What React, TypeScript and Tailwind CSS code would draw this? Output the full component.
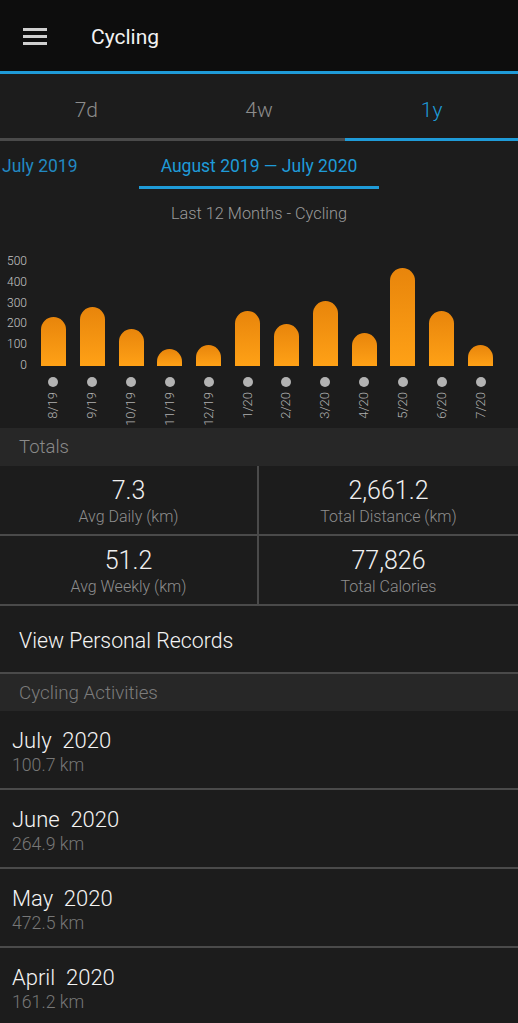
import React from "react";

const bars = [
  { label: "8/19", v: 236 },
  { label: "9/19", v: 287 },
  { label: "10/19", v: 181 },
  { label: "11/19", v: 84 },
  { label: "12/19", v: 100 },
  { label: "1/20", v: 266 },
  { label: "2/20", v: 205 },
  { label: "3/20", v: 313 },
  { label: "4/20", v: 161 },
  { label: "5/20", v: 473 },
  { label: "6/20", v: 265 },
  { label: "7/20", v: 101 },
];

const activities = [
  { m: "July", d: "100.7 km" },
  { m: "June", d: "264.9 km" },
  { m: "May", d: "472.5 km" },
  { m: "April", d: "161.2 km" },
];

export default function App() {
  return (
    <div
      className="w-[518px] h-[1023px] overflow-hidden bg-[#1c1c1c] text-white"
      style={{ fontFamily: "Roboto, 'Liberation Sans', sans-serif" }}
    >
      {/* Header */}
      <div className="h-[71px] bg-[#0d0d0d] flex items-center">
        <div className="ml-[23px] mt-[1px] w-[24px] flex flex-col gap-[4px]">
          <div className="h-[3px] bg-[#cfcfcf]" />
          <div className="h-[3px] bg-[#cfcfcf]" />
          <div className="h-[3px] bg-[#cfcfcf]" />
        </div>
        <div className="ml-[44px] mt-[3px] text-[21px] font-normal leading-none text-[#f2f2f2]">
          Cycling
        </div>
      </div>
      <div className="h-[3px] bg-[#1f9bd8]" />

      {/* Tabs */}
      <div className="grid grid-cols-3 h-[67px]">
        <div className="flex items-center justify-center pt-[10px] border-b-[3px] border-[#4a4a4a] text-[21px] font-light text-[#8c8c8c]">
          7d
        </div>
        <div className="flex items-center justify-center pt-[10px] border-b-[3px] border-[#4a4a4a] text-[21px] font-light text-[#8c8c8c]">
          4w
        </div>
        <div className="flex items-center justify-center pt-[10px] border-b-[3px] border-[#1f9bd8] text-[21px] font-light text-[#1f9bd8]">
          1y
        </div>
      </div>

      {/* Period pager */}
      <div className="grid grid-cols-[1fr_240px_1fr] h-[49px]">
        <div className="pt-[14px] pl-[2px] text-[17.5px] leading-[22px] font-normal text-[#2289c2] whitespace-nowrap">
          July 2019
        </div>
        <div className="flex flex-col items-center pt-[14px]">
          <div className="text-[17.5px] leading-[22px] font-normal text-[#1f9bd8] whitespace-nowrap">
            August 2019 — July 2020
          </div>
          <div className="mt-auto mb-[1px] h-[3px] w-full bg-[#1f9bd8]" />
        </div>
        <div />
      </div>

      {/* Chart title */}
      <div className="h-[48px] pt-[14px] text-center text-[16.3px] leading-[20px] font-light text-[#9a9a9a]">
        Last 12 Months - Cycling
      </div>

      {/* Chart */}
      <div className="h-[190px] flex items-start pt-[16px] pr-[18px]">
        <div className="w-[34px] h-[118px] flex flex-col justify-between items-end pr-[7px] text-[12px] leading-[14px] font-light text-[#c4c4c4]">
          <span>500</span>
          <span>400</span>
          <span>300</span>
          <span>200</span>
          <span>100</span>
          <span>0</span>
        </div>
        <div className="flex-1 grid grid-cols-12">
          {bars.map((b) => (
            <div key={b.label} className="flex flex-col items-center">
              <div className="h-[112px] w-full flex items-end justify-center">
                <div
                  className="w-[25px] rounded-t-full bg-gradient-to-b from-[#e8850b] to-[#ffa116]"
                  style={{ height: `${Math.max(b.v * 0.2066, 12.5)}px` }}
                />
              </div>
              <div className="mt-[11px] w-[10px] h-[10px] rounded-full bg-[#b3b3b3]" />
              <div className="mt-[5px] [writing-mode:vertical-rl] rotate-180 text-[13px] leading-[14px] font-light text-[#b0b0b0] whitespace-nowrap">
                {b.label}
              </div>
            </div>
          ))}
        </div>
      </div>

      {/* Totals header */}
      <div className="h-[38px] bg-[#272727] flex items-center pt-[2px] pl-[19px] text-[18.5px] font-light text-[#8a8a8a]">
        Totals
      </div>

      {/* Totals grid */}
      <div className="grid grid-cols-2">
        {[
          { v: "7.3", l: "Avg Daily (km)" },
          { v: "2,661.2", l: "Total Distance (km)" },
          { v: "51.2", l: "Avg Weekly (km)" },
          { v: "77,826", l: "Total Calories" },
        ].map((c, i) => (
          <div
            key={c.l}
            className={`h-[70px] border-b-[2px] border-[#4a4a4a] flex flex-col items-center pt-[10px] ${
              i % 2 === 0 ? "border-r-[2px]" : ""
            }`}
          >
            <div className="text-[25px] leading-[30px] font-light text-[#f0f0f0]">{c.v}</div>
            <div className="text-[16px] leading-[22px] font-light text-[#8e8e8e]">{c.l}</div>
          </div>
        ))}
      </div>

      {/* Personal records */}
      <div className="h-[68px] flex items-center pt-[3px] pl-[19px] text-[21.3px] font-light text-[#f4f4f4] border-b-[2px] border-[#4a4a4a]">
        View Personal Records
      </div>

      {/* Activities header */}
      <div className="h-[37px] bg-[#272727] flex items-center pt-[2px] pl-[19px] text-[18.8px] font-light text-[#7c7c7c]">
        Cycling Activities
      </div>

      {/* Activities */}
      {activities.map((a, i) => (
        <div
          key={a.m}
          className={`h-[79px] pl-[12px] pt-[16px] ${
            i < activities.length - 1 ? "border-b-[2px] border-[#4a4a4a]" : ""
          }`}
        >
          <div className="text-[22px] leading-[27px] font-light text-[#f4f4f4] whitespace-pre">
            {a.m}  2020
          </div>
          <div className="text-[17.7px] leading-[22px] font-light text-[#777777]">
            {a.d}
          </div>
        </div>
      ))}
    </div>
  );
}
